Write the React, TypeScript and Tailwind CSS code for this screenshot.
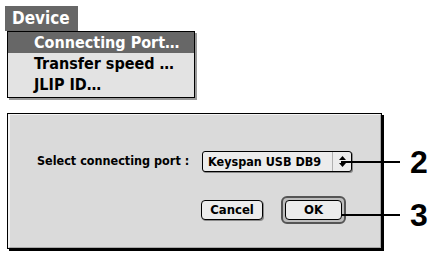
import React from "react";

const font = { fontFamily: '"DejaVu Sans Condensed", "DejaVu Sans", sans-serif' };

const Callout: React.FC<{ n: string; top: number; left: number }> = ({ n, top, left }) => (
  <div className="absolute flex items-center" style={{ top, left }}>
    <div className="w-[59px] h-[2px] bg-black" />
    <span className="ml-[10px] text-[32px] leading-none font-black text-black" style={{ fontFamily: '"Liberation Sans", Arial, sans-serif' }}>
      {n}
    </span>
  </div>
);

const App: React.FC = () => {
  return (
    <div className="relative w-[434px] h-[253px] bg-white overflow-hidden" style={font}>
      {/* menu */}
      <div className="pt-[6px] pl-[5px]">
        <div className="w-[73px] h-[25px] bg-[#676767] text-white font-bold text-[17px] leading-[25px] pl-[7px]">
          Device
        </div>
        <div className="ml-[2px] w-[188px] border border-black bg-[#e3e3e3] shadow-[2px_2px_0_#9a9a9a] pb-[2px]">
          <div className="h-[21px] bg-[#676767] text-white font-bold text-[16px] leading-[21px] pl-[26px]">
            Connecting Port…
          </div>
          <div className="h-[21px] text-black font-bold text-[16px] leading-[21px] pl-[26px]">
            Transfer speed …
          </div>
          <div className="h-[21px] text-black font-bold text-[16px] leading-[21px] pl-[26px]">
            JLIP ID…
          </div>
        </div>
      </div>

      {/* dialog */}
      <div className="ml-[7px] mt-[15px] w-[375px] h-[136px] border border-black bg-[#dadada] shadow-[2px_2px_0_#000]">
        <div className="h-full border-l-2 border-t border-l-[#f4f4f4] border-t-[#f4f4f4] border-r border-b border-r-[#a8a8a8] border-b-[#a8a8a8] flex flex-col">
          <div className="flex items-center mt-[36px] pl-[27px]">
            <span className="text-[12.5px] font-bold text-black w-[165px]">Select connecting port :</span>
            <div className="flex items-stretch w-[150px] h-[21px] rounded-[3px] border border-black bg-[#ececec] shadow-[1px_1px_0_#8a8a8a]">
              <span className="flex-1 text-[12.5px] font-bold leading-[19px] pl-[5px]">Keyspan USB DB9</span>
              <div className="w-[19px] border-l border-[#b0b0b0] flex items-center justify-center">
                <svg width="7" height="11" viewBox="0 0 7 11">
                  <path d="M3.5 0 L7 4 L0 4 Z" fill="#000" />
                  <path d="M0 7 L7 7 L3.5 11 Z" fill="#000" />
                </svg>
              </div>
            </div>
          </div>
          <div className="flex items-center mt-[24px] pl-[191px]">
            <div className="w-[62px] h-[20px] rounded-[4px] border border-black bg-[#ececec] shadow-[1px_1px_0_#8a8a8a] text-[13px] font-bold text-center leading-[18px]">
              Cancel
            </div>
            <div className="ml-[18px] w-[65px] h-[28px] rounded-[6px] border-2 border-[#555] bg-[#bdbdbd] p-[2px]">
              <div className="h-full rounded-[4px] border border-black bg-[#ececec] text-[13px] font-bold text-center leading-[18px]">
                OK
              </div>
            </div>
          </div>
        </div>
      </div>

      <Callout n="2" top={146} left={341} />
      <Callout n="3" top={199} left={341} />
    </div>
  );
};

export default App;
